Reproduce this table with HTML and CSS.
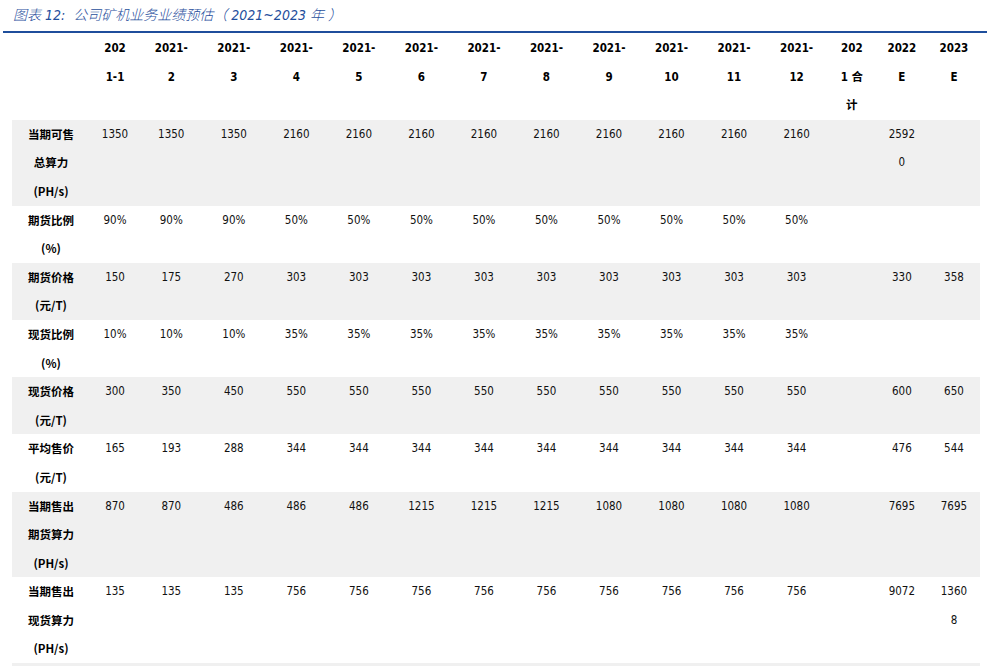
FILE: index.html
```html
<!DOCTYPE html>
<html lang="zh">
<head>
<meta charset="utf-8">
<link rel="stylesheet" href="styles.css">
</head>
<body>
<div class="title">图表 12:&nbsp;&nbsp;公司矿机业务业绩预估（ 2021~2023 年 ）</div>
<table class="tbl">
  <colgroup>
    <col class="c-label"><col class="c-first">
    <col class="c-m"><col class="c-m"><col class="c-m"><col class="c-m"><col class="c-m"><col class="c-m"><col class="c-m"><col class="c-m"><col class="c-m"><col class="c-m"><col class="c-m">
    <col class="c-sum"><col class="c-e"><col class="c-e">
  </colgroup>
  <thead>
    <tr>
      <th></th>
      <th>202<br>1-1</th><th>2021-<br>2</th><th>2021-<br>3</th><th>2021-<br>4</th><th>2021-<br>5</th><th>2021-<br>6</th><th>2021-<br>7</th><th>2021-<br>8</th><th>2021-<br>9</th><th>2021-<br>10</th><th>2021-<br>11</th><th>2021-<br>12</th>
      <th>202<br>1 合<br>计</th><th>2022<br>E</th><th>2023<br>E</th>
    </tr>
  </thead>
  <tbody>
    <tr class="alt">
      <th>当期可售<br>总算力<br>(PH/s)</th>
      <td>1350</td><td>1350</td><td>1350</td><td>2160</td><td>2160</td><td>2160</td><td>2160</td><td>2160</td><td>2160</td><td>2160</td><td>2160</td><td>2160</td>
      <td></td><td>2592<br>0</td><td></td>
    </tr>
    <tr>
      <th>期货比例<br>(%)</th>
      <td>90%</td><td>90%</td><td>90%</td><td>50%</td><td>50%</td><td>50%</td><td>50%</td><td>50%</td><td>50%</td><td>50%</td><td>50%</td><td>50%</td>
      <td></td><td></td><td></td>
    </tr>
    <tr class="alt">
      <th>期货价格<br>(元/T)</th>
      <td>150</td><td>175</td><td>270</td><td>303</td><td>303</td><td>303</td><td>303</td><td>303</td><td>303</td><td>303</td><td>303</td><td>303</td>
      <td></td><td>330</td><td>358</td>
    </tr>
    <tr>
      <th>现货比例<br>(%)</th>
      <td>10%</td><td>10%</td><td>10%</td><td>35%</td><td>35%</td><td>35%</td><td>35%</td><td>35%</td><td>35%</td><td>35%</td><td>35%</td><td>35%</td>
      <td></td><td></td><td></td>
    </tr>
    <tr class="alt">
      <th>现货价格<br>(元/T)</th>
      <td>300</td><td>350</td><td>450</td><td>550</td><td>550</td><td>550</td><td>550</td><td>550</td><td>550</td><td>550</td><td>550</td><td>550</td>
      <td></td><td>600</td><td>650</td>
    </tr>
    <tr>
      <th>平均售价<br>(元/T)</th>
      <td>165</td><td>193</td><td>288</td><td>344</td><td>344</td><td>344</td><td>344</td><td>344</td><td>344</td><td>344</td><td>344</td><td>344</td>
      <td></td><td>476</td><td>544</td>
    </tr>
    <tr class="alt">
      <th>当期售出<br>期货算力<br>(PH/s)</th>
      <td>870</td><td>870</td><td>486</td><td>486</td><td>486</td><td>1215</td><td>1215</td><td>1215</td><td>1080</td><td>1080</td><td>1080</td><td>1080</td>
      <td></td><td>7695</td><td>7695</td>
    </tr>
    <tr>
      <th>当期售出<br>现货算力<br>(PH/s)</th>
      <td>135</td><td>135</td><td>135</td><td>756</td><td>756</td><td>756</td><td>756</td><td>756</td><td>756</td><td>756</td><td>756</td><td>756</td>
      <td></td><td>9072</td><td>1360<br>8</td>
    </tr>
    <tr class="alt tail">
      <th></th><td></td><td></td><td></td><td></td><td></td><td></td><td></td><td></td><td></td><td></td><td></td><td></td><td></td><td></td><td></td>
    </tr>
  </tbody>
</table>
</body>
</html>
```
FILE: styles.css
```css
html, body {
  margin: 0;
  padding: 0;
  background: #ffffff;
}

body {
  font-family: "DejaVu Sans Condensed", "DejaVu Sans", "Noto Sans CJK SC", sans-serif;
  color: #000;
  overflow: hidden;
}

.title {
  margin-left: 3px;
  width: 974px;
  height: 31px;
  padding-left: 10px;
  line-height: 31px;
  font-family: "DejaVu Sans Condensed", "Noto Sans CJK SC", sans-serif;
  font-size: 14px;
  font-weight: 300;
  font-style: italic;
  color: #1f4e9c;
  border-bottom: 2px solid #1f4e9c;
  white-space: nowrap;
}

.tbl {
  margin-top: 1px;
  margin-left: 12px;
  width: 968px;
  table-layout: fixed;
  border-collapse: collapse;
  border-spacing: 0;
  font-size: 11.5px;
  line-height: 28.6px;
}

.c-label { width: 78px; }
.c-first { width: 50px; }
.c-m { width: 62.545px; }
.c-sum { width: 48px; }
.c-e { width: 52px; }

.tbl th,
.tbl td {
  padding: 0;
  text-align: center;
  vertical-align: top;
  white-space: nowrap;
}

.tbl th {
  font-weight: bold;
}

.tbl tbody th {
  font-family: "Noto Sans CJK SC", "DejaVu Sans Condensed", sans-serif;
  font-size: 11.5px;
  font-weight: 700;
}

.tbl td {
  font-weight: normal;
  color: #111;
}

.tbl tr.alt {
  background: #f0f0f0;
}

.tbl tr.tail th,
.tbl tr.tail td {
  height: 20px;
  padding: 0;
}
```
